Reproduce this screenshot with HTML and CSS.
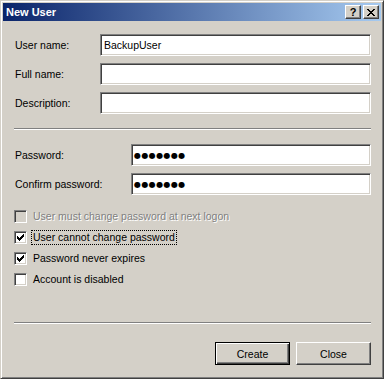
FILE: index.html
```html
<!DOCTYPE html>
<html lang="en">
<head>
    <meta charset="UTF-8">
    <title>New User</title>
    <link rel="stylesheet" href="styles.css">
</head>
<body>
    <div class="window">
        <div class="titlebar">
            <span class="title">New User</span>
            <div class="title-btns">
                <button class="tbtn help">?</button>
                <button class="tbtn">
                    <svg width="8" height="7" viewBox="0 0 8 7" shape-rendering="crispEdges">
                        <path d="M0 0h2v1h-2zM6 0h2v1h-2zM1 1h2v1h-2zM5 1h2v1h-2zM2 2h4v1h-4zM3 3h2v1h-2zM2 4h4v1h-4zM1 5h2v1h-2zM5 5h2v1h-2zM0 6h2v1h-2zM6 6h2v1h-2z" fill="#000"/>
                    </svg>
                </button>
            </div>
        </div>

        <div class="content">
            <div class="fields">
                <label class="lbl">User name:</label>
                <input type="text" class="field" value="BackupUser">
                <label class="lbl">Full name:</label>
                <input type="text" class="field">
                <label class="lbl">Description:</label>
                <input type="text" class="field">
            </div>

            <div class="sep"></div>

            <div class="fields pw">
                <label class="lbl">Password:</label>
                <div class="field dots">&#9679;&#9679;&#9679;&#9679;&#9679;&#9679;&#9679;</div>
                <label class="lbl">Confirm password:</label>
                <div class="field dots">&#9679;&#9679;&#9679;&#9679;&#9679;&#9679;&#9679;</div>
            </div>

            <div class="checks">
                <div class="check disabled">
                    <span class="box"></span>
                    <span class="text">User must change password at next logon</span>
                </div>
                <div class="check">
                    <span class="box">
                        <svg width="13" height="13" viewBox="0 0 13 13" shape-rendering="crispEdges"><path class="tick" d="M1 3h1v3h-1zM2 4h1v3h-1zM3 5h1v3h-1zM4 4h1v3h-1zM5 3h1v3h-1zM6 2h1v3h-1zM7 1h1v3h-1z"/></svg>
                    </span>
                    <span class="text focus">User cannot change password</span>
                </div>
                <div class="check">
                    <span class="box">
                        <svg width="13" height="13" viewBox="0 0 13 13" shape-rendering="crispEdges"><path class="tick" d="M1 3h1v3h-1zM2 4h1v3h-1zM3 5h1v3h-1zM4 4h1v3h-1zM5 3h1v3h-1zM6 2h1v3h-1zM7 1h1v3h-1z"/></svg>
                    </span>
                    <span class="text">Password never expires</span>
                </div>
                <div class="check">
                    <span class="box"></span>
                    <span class="text">Account is disabled</span>
                </div>
            </div>

            <div class="sep bottom"></div>

            <div class="actions">
                <button class="btn default">Create</button>
                <button class="btn">Close</button>
            </div>
        </div>
    </div>
</body>
</html>
```

FILE: styles.css
```css
body {
    margin: 0;
    padding: 0;
    background: #d4d0c8;
    font-family: "Liberation Sans", Arial, sans-serif;
    font-size: 10.5px;
    color: #000;
}
.window {
    width: 384px;
    height: 379px;
    box-sizing: border-box;
    background: #d4d0c8;
    border: 1px solid;
    border-color: #d4d0c8 #404040 #404040 #d4d0c8;
    box-shadow: inset 1px 1px #fff, inset -1px -1px #808080;
    padding: 2px;
}
.titlebar {
    height: 18px;
    display: flex;
    align-items: center;
    justify-content: space-between;
    background: linear-gradient(to right, #0a246a, #a6caf0);
    padding: 0 2px 0 2px;
}
.title {
    color: #fff;
    font-weight: bold;
    font-size: 11px;
    padding-left: 1px;
}
.title-btns {
    display: flex;
    gap: 2px;
}
.tbtn {
    width: 16px;
    height: 14px;
    padding: 0;
    margin: 0;
    background: #d4d0c8;
    border: 1px solid;
    border-color: #fff #404040 #404040 #fff;
    box-shadow: inset -1px -1px #808080;
    display: flex;
    align-items: center;
    justify-content: center;
    font-family: "Liberation Sans", Arial, sans-serif;
    font-weight: bold;
    font-size: 11px;
    line-height: 1;
    color: #000;
}
.content {
    padding: 13px 10px 0 11px;
}
.fields {
    display: grid;
    grid-template-columns: 86px 1fr;
    grid-auto-rows: 22px;
    row-gap: 7px;
    align-items: center;
}
.fields.pw {
    grid-template-columns: 117px 1fr;
    margin-top: 14px;
}
.lbl {
    padding-left: 1px;
}
.field {
    height: 22px;
    box-sizing: border-box;
    margin: 0;
    background: #fff;
    border: 1px solid;
    border-color: #808080 #fff #fff #808080;
    box-shadow: inset 1px 1px #404040, inset -1px -1px #d4d0c8;
    padding: 0 3px;
    font-family: "Liberation Sans", Arial, sans-serif;
    font-size: 10.5px;
    color: #000;
    outline: none;
}
.dots {
    display: flex;
    align-items: center;
    font-family: "DejaVu Sans", sans-serif;
    font-size: 8px;
    letter-spacing: 0.4px;
    padding-left: 2px;
}
.sep {
    border-top: 1px solid #808080;
    border-bottom: 1px solid #fff;
    height: 0;
    margin-top: 14px;
}
.sep.bottom {
    margin-top: 36px;
}
.checks {
    margin-top: 15px;
    display: flex;
    flex-direction: column;
    gap: 8px;
}
.check {
    display: flex;
    align-items: center;
    height: 13px;
}
.box {
    width: 13px;
    height: 13px;
    box-sizing: border-box;
    background: #fff;
    border: 1px solid;
    border-color: #808080 #fff #fff #808080;
    box-shadow: inset 1px 1px #404040, inset -1px -1px #d4d0c8;
    position: relative;
    flex: none;
}
.box svg {
    position: absolute;
    left: 1px;
    top: 1px;
}
.tick {
    fill: #000;
}
.check .text {
    margin-left: 4px;
    padding: 0 1px;
    line-height: 13px;
    border: 1px dotted transparent;
}
.check .text.focus {
    border-color: #000;
}
.check.disabled .box {
    background: #d4d0c8;
}
.check.disabled .text {
    color: #808080;
    text-shadow: 1px 1px #fff;
}
.actions {
    margin-top: 18px;
    display: flex;
    justify-content: flex-end;
    gap: 6px;
}
.btn {
    width: 75px;
    height: 23px;
    box-sizing: border-box;
    margin: 0;
    padding: 0;
    background: #d4d0c8;
    border: 1px solid;
    border-color: #fff #404040 #404040 #fff;
    box-shadow: inset -1px -1px #808080;
    font-family: "Liberation Sans", Arial, sans-serif;
    font-size: 10.5px;
    color: #000;
}
.btn.default {
    border: 1px solid #000;
    box-shadow: inset 1px 1px #fff, inset -1px -1px #404040, inset -2px -2px #808080;
}
```
